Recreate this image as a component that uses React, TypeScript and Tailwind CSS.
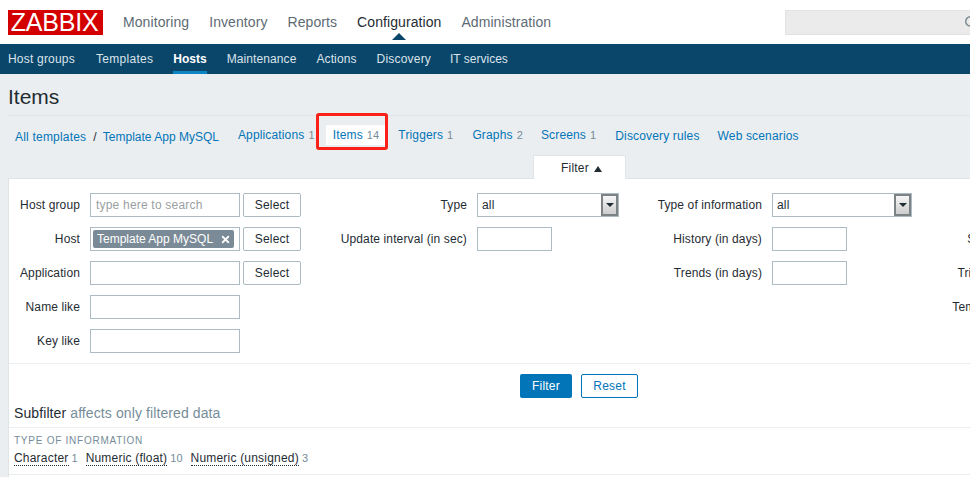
import { X, Search } from "lucide-react";
import type { ReactNode } from "react";

const font = { fontFamily: '"Liberation Sans", Arial, sans-serif' };

function TextBox({ width = "w-[150px]", children, placeholder }: { width?: string; children?: ReactNode; placeholder?: string }) {
  return (
    <div className={`${width} shrink-0 h-6 border border-[#acbbc4] bg-white flex items-center px-[5px] text-[#9a9fa3]`}>
      {placeholder}
      {children}
    </div>
  );
}

function SelectButton() {
  return (
    <button className="w-[58px] h-6 shrink-0 border border-[#acbbc4] rounded-[2px] bg-white text-[#1f2c33] text-xs">Select</button>
  );
}

function Dropdown({ width }: { width: string }) {
  return (
    <div className={`${width} shrink-0 h-6 border border-[#acbbc4] bg-white flex items-center justify-between pl-[4px] text-[#1f2c33]`}>
      <span>all</span>
      <span className="w-[17px] h-[22px] border-2 border-[#7d8285] bg-gradient-to-b from-[#f6f6f6] to-[#cdcdcd] flex items-center justify-center">
        <svg width="8" height="4" viewBox="0 0 8 4"><path d="M0 0h8L4 4z" fill="#1f2c33" /></svg>
      </span>
    </div>
  );
}

function Row({ label, labelWidth, children }: { label: string; labelWidth: string; children?: ReactNode }) {
  return (
    <div className="flex items-center h-6 gap-[10px]">
      <div className={`${labelWidth} shrink-0 text-right text-[#1f2c33] whitespace-nowrap tracking-[0.12px]`}>{label}</div>
      {children}
    </div>
  );
}

function Tab({ label, count, active }: { label: string; count?: number; active?: boolean }) {
  return (
    <div className={`h-5 px-[7px] flex items-center gap-[4px] whitespace-nowrap tracking-[0.15px] ${active ? "bg-white" : ""}`}>
      <span className="text-[#0275b8]">{label}</span>
      {count !== undefined && <span className="text-[11px] text-[#768d99]">{count}</span>}
    </div>
  );
}

function Sub({ label, count }: { label: string; count: number }) {
  return (
    <span className="whitespace-nowrap">
      <span className="text-[#1f2c33] border-b border-dotted border-[#1f2c33]">{label}</span>
      <span className="ml-[3px] text-[11px] tracking-normal text-[#768d99]">{count}</span>
    </span>
  );
}

export default function App() {
  const top = ["Monitoring", "Inventory", "Reports", "Configuration", "Administration"];
  const sub = [
    { label: "Host groups", cls: "" },
    { label: "Templates", cls: "ml-[21px] tracking-[0.3px]" },
    { label: "Hosts", cls: "ml-5" },
    { label: "Maintenance", cls: "ml-5 tracking-[0.1px]" },
    { label: "Actions", cls: "ml-5 tracking-[0.1px]" },
    { label: "Discovery", cls: "ml-5" },
    { label: "IT services", cls: "ml-[19px] tracking-normal" },
  ];

  return (
    <div style={font} className="relative w-[970px] h-[477px] overflow-hidden bg-[#ebeef0] text-xs tracking-[0.2px]">
      {/* Main menu */}
      <header className="h-11 bg-white flex items-center pl-2 tracking-normal">
        <div className="w-[95px] h-[25px] bg-[#d40000] text-white text-[25px] leading-[25px] tracking-[-0.2px] pr-[2px] text-center">ZABBIX</div>
        <nav className="flex ml-5 gap-5 text-sm tracking-[0.08px]">
          {top.map((t) => (
            <span key={t} className={`relative ${t === "Configuration" ? "text-[#1f2c33]" : "text-[#5d6b73]"}`}>
              {t}
              {t === "Configuration" && (
                <span className="absolute left-[35px] top-[21px] w-0 h-0 border-x-[7px] border-x-transparent border-b-[7px] border-b-[#0a466a]" />
              )}
            </span>
          ))}
        </nav>
        <div className="ml-auto w-[200px] h-[25px] bg-[#ebebeb] border border-[#e3e3e3] flex items-center pl-[178px] -mr-[15px] shrink-0">
          <Search size={14} strokeWidth={2.5} className="text-[#7b8a94] shrink-0" />
        </div>
      </header>

      {/* Section menu */}
      <nav className="h-[30px] bg-[#0a466a] flex pl-2">
        {sub.map((s) => (
          <span key={s.label} className={`h-full flex items-center border-b-[3px] pt-[3px] ${s.cls} ${s.label === "Hosts" ? "border-[#0f84c4] text-white font-bold tracking-normal" : "border-transparent text-[#dbe4ea]"}`}>
            {s.label}
          </span>
        ))}
      </nav>

      {/* Page title */}
      <div className="ml-2 h-[42px] border-b border-[#dfe4e7] flex items-center">
        <h1 className="text-[21px] text-[#1f2c33] tracking-normal pt-[5px]">Items</h1>
      </div>

      {/* Breadcrumbs and template tabs */}
      <div className="h-[39px] flex items-center pl-[15px]">
        <div className="flex items-center text-[#0275b8] mt-[2px] whitespace-nowrap">
          <span>All templates</span>
          <span className="ml-[7px] mr-[6px] text-[#1f2c33]">/</span>
          <span className="tracking-normal">Template App MySQL</span>
        </div>
        <div className="flex ml-[12px]">
          <Tab label="Applications" count={1} />
          <div className="ml-1"><Tab label="Items" count={14} active /></div>
          <div className="ml-[5px]"><Tab label="Triggers" count={1} /></div>
          <div className="ml-[5px]"><Tab label="Graphs" count={2} /></div>
          <div className="ml-1"><Tab label="Screens" count={1} /></div>
          <div className="ml-[5px] mt-[1px]"><Tab label="Discovery rules" /></div>
          <div className="ml-1 mt-[1px]"><Tab label="Web scenarios" /></div>
        </div>
      </div>

      {/* Filter toggle */}
      <div className="h-[23px] pl-[533px] relative z-10">
        <div className="w-[93px] h-[24px] bg-white border border-b-0 border-[#dfe4e7] rounded-t-[2px] flex items-center justify-center gap-[5px] pl-1 text-[#1f2c33]">
          Filter
          <svg width="8" height="6" viewBox="0 0 8 6" className="mt-[2px]"><path d="M4 0l4 6H0z" fill="#1f2c33" /></svg>
        </div>
      </div>

      {/* Filter panel */}
      <section className="ml-2 w-[1142px] h-[300px] bg-white border border-[#dfe4e7]">
        <div className="h-[185px] border-b border-[#ebeef0] pt-[14px] flex">
          <div className="flex flex-col gap-[10px] w-[300px] shrink-0">
            <Row label="Host group" labelWidth="w-[71px]"><TextBox placeholder="type here to search" /><div className="-ml-[7px]"><SelectButton /></div></Row>
            <Row label="Host" labelWidth="w-[71px]">
              <TextBox>
                <span className="-ml-[3px] h-[18px] w-[141px] shrink-0 rounded-[2px] bg-[#7a8b97] text-white tracking-normal flex items-center justify-between pl-1 pr-[3px] whitespace-nowrap">
                  Template App MySQL
                  <X size={11} strokeWidth={4} />
                </span>
              </TextBox>
              <div className="-ml-[7px]"><SelectButton /></div>
            </Row>
            <Row label="Application" labelWidth="w-[71px]"><TextBox /><div className="-ml-[7px]"><SelectButton /></div></Row>
            <Row label="Name like" labelWidth="w-[71px]"><TextBox /></Row>
            <Row label="Key like" labelWidth="w-[71px]"><TextBox /></Row>
          </div>
          <div className="flex flex-col gap-[10px] w-[295px] shrink-0">
            <Row label="Type" labelWidth="w-[158px]"><Dropdown width="w-[142px]" /></Row>
            <Row label="Update interval (in sec)" labelWidth="w-[158px]"><TextBox width="w-[75px]" /></Row>
          </div>
          <div className="flex flex-col gap-[10px] w-[347px] shrink-0">
            <Row label="Type of information" labelWidth="w-[158px]"><Dropdown width="w-[140px]" /></Row>
            <Row label="History (in days)" labelWidth="w-[158px]"><TextBox width="w-[75px]" /></Row>
            <Row label="Trends (in days)" labelWidth="w-[158px]"><TextBox width="w-[75px]" /></Row>
          </div>
          <div className="flex flex-col gap-[10px] shrink-0 pl-[1px]">
            <Row label="State" labelWidth="w-[50px]" />
            <Row label="Status" labelWidth="w-[50px]" />
            <Row label="Triggers" labelWidth="w-[50px]" />
            <Row label="Template" labelWidth="w-[50px]" />
          </div>
        </div>

        <div className="flex justify-center gap-[9px] pt-[10px]">
          <button className="w-[52px] h-6 rounded-[2px] bg-[#0275b8] text-white">Filter</button>
          <button className="w-[57px] h-6 rounded-[2px] border border-[#0275b8] bg-white text-[#0275b8]">Reset</button>
        </div>

        <div className="h-[30px] pl-[5px] pt-[5px] text-sm tracking-[0.1px] text-[#1f2c33] border-b border-[#ebeef0]">
          Subfilter <span className="text-[#768d99]">affects only filtered data</span>
        </div>

        <div className="h-[47px] pl-[5px] pt-[7px] border-b border-[#ebeef0]">
          <div className="text-[10px] leading-[12px] tracking-[0.75px] text-[#768d99]">TYPE OF INFORMATION</div>
          <div className="flex gap-2 mt-1 leading-[14px]">
            <Sub label="Character" count={1} />
            <Sub label="Numeric (float)" count={10} />
            <Sub label="Numeric (unsigned)" count={3} />
          </div>
        </div>
      </section>

      {/* Callout around the Items tab */}
      <div className="absolute left-[316px] top-[113px] w-[72px] h-[37px] border-[3px] border-[#fb2018] rounded-[3px] pointer-events-none" />
    </div>
  );
}
